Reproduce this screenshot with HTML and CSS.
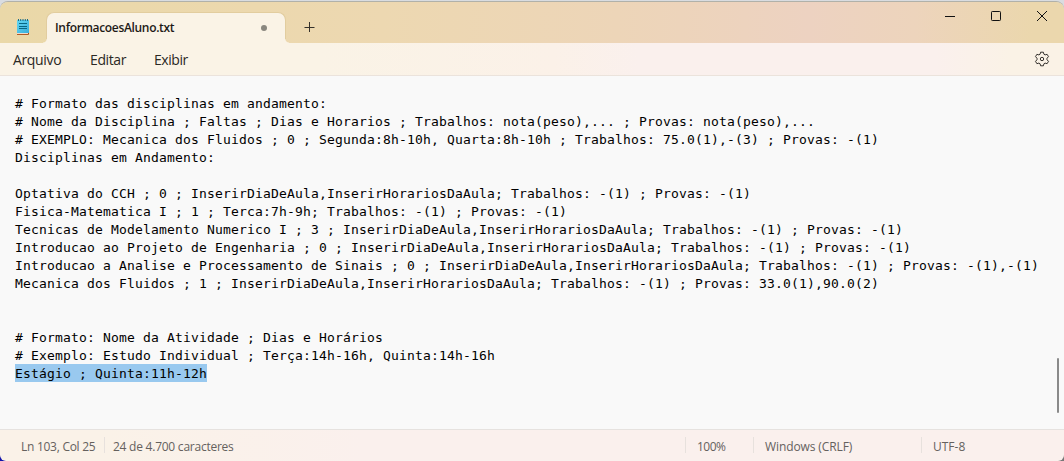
FILE: index.html
```html
<!DOCTYPE html>
<html lang="pt-BR">
<head>
<meta charset="utf-8">
<title>InformacoesAluno.txt</title>
<link rel="stylesheet" href="styles.css">
</head>
<body>
<div class="window">
  <header class="titlebar">
    <svg class="app-icon" width="14" height="18" viewBox="0 0 14 18">
      <defs><linearGradient id="note" x1="0" y1="0" x2="1" y2="1"><stop stop-color="#63d8f3"/><stop offset="1" stop-color="#38addb"/></linearGradient></defs>
      <path d="M1 14h12v2H1z" fill="#f5eee3"/>
      <path d="M1 16.4h11.5V15" fill="none" stroke="#a84b16"/>
      <rect x="1" y="2" width="12" height="13" rx=".6" fill="url(#note)"/>
      <path d="M2.5 1v2M4.7 1v2M7 1v2M9.3 1v2M11.5 1v2" stroke="#176984" stroke-width="1"/>
      <path d="M3 5.5h8M3 8.5h8M3 10.5h8" stroke="#086783"/>
    </svg>
    <div class="tab"><span class="tab-name">InformacoesAluno.txt</span><span class="unsaved"></span></div>
    <svg class="add" width="12" height="12" viewBox="0 0 12 12"><path d="M6.5 1v10M1.5 6.5h10" stroke="#35312a" fill="none"/></svg>
    <div class="controls">
      <svg width="12" height="12" viewBox="0 0 12 12"><path d="M1 6.5h10" stroke="#111"/></svg>
      <svg width="12" height="12" viewBox="0 0 12 12"><rect x="1.5" y="1.5" width="9" height="9" rx=".8" fill="none" stroke="#111"/></svg>
      <svg width="12" height="12" viewBox="0 0 12 12"><path d="M1 1l10 10M11 1L1 11" stroke="#111"/></svg>
    </div>
  </header>
  <nav class="menubar">
    <span class="menu m-file">Arquivo</span><span class="menu m-edit">Editar</span><span class="menu m-view">Exibir</span>
    <svg class="gear" width="16" height="16" viewBox="0 0 16 16" fill="none" stroke="#35322e" stroke-linejoin="round">
      <path d="M6.6 1.2h2.8l.5 2 1.2.7 2-.6 1.4 2.4-1.5 1.5v1.6l1.5 1.5-1.4 2.4-2-.6-1.2.7-.5 2H6.6l-.5-2-1.2-.7-2 .6-1.4-2.4L3 8.8V7.2L1.5 5.7l1.4-2.4 2 .6 1.2-.7z"/>
      <circle cx="8" cy="8" r="1.7"/>
    </svg>
  </nav>
  <main class="editor">
<pre class="text"># Formato das disciplinas em andamento:
# Nome da Disciplina ; Faltas ; Dias e Horarios ; Trabalhos: nota(peso),... ; Provas: nota(peso),...
# EXEMPLO: Mecanica dos Fluidos ; 0 ; Segunda:8h-10h, Quarta:8h-10h ; Trabalhos: 75.0(1),-(3) ; Provas: -(1)
Disciplinas em Andamento:

Optativa do CCH ; 0 ; InserirDiaDeAula,InserirHorariosDaAula; Trabalhos: -(1) ; Provas: -(1)
Fisica-Matematica I ; 1 ; Terca:7h-9h; Trabalhos: -(1) ; Provas: -(1)
Tecnicas de Modelamento Numerico I ; 3 ; InserirDiaDeAula,InserirHorariosDaAula; Trabalhos: -(1) ; Provas: -(1)
Introducao ao Projeto de Engenharia ; 0 ; InserirDiaDeAula,InserirHorariosDaAula; Trabalhos: -(1) ; Provas: -(1)
Introducao a Analise e Processamento de Sinais ; 0 ; InserirDiaDeAula,InserirHorariosDaAula; Trabalhos: -(1) ; Provas: -(1),-(1)
Mecanica dos Fluidos ; 1 ; InserirDiaDeAula,InserirHorariosDaAula; Trabalhos: -(1) ; Provas: 33.0(1),90.0(2)


# Formato: Nome da Atividade ; Dias e Horários
# Exemplo: Estudo Individual ; Terça:14h-16h, Quinta:14h-16h
<span class="selected">Estágio ; Quinta:11h-12h</span></pre>
    <div class="scroll-thumb"></div>
  </main>
  <footer class="statusbar">
    <div class="cell position"><span>Ln 103, Col 25</span></div>
    <div class="cell count"><span>24 de 4.700 caracteres</span></div>
    <div class="cell zoom"><span>100%</span></div>
    <div class="cell eol"><span>Windows (CRLF)</span></div>
    <div class="cell encoding"><span>UTF-8</span></div>
  </footer>
</div>
</body>
</html>
```
FILE: styles.css
```css
* { box-sizing: border-box; }
body {
  margin: 0;
  width: 1064px;
  height: 461px;
  overflow: hidden;
  padding-top: 1px;
  background: linear-gradient(#d9dce0 0 50%, transparent 50%), linear-gradient(90deg, #1414aa 50%, #777 50%);
  font-family: "Open Sans", "Noto Sans", sans-serif;
}
svg { display: block; flex: none; }
.window {
  height: 460px;
  display: flex;
  flex-direction: column;
  border-top: 1px solid #b1b1a9;
  border-radius: 8px 8px 6px 6px;
  overflow: hidden;
}
.titlebar {
  height: 41px;
  display: flex;
  background: linear-gradient(90deg, #ead8a8 0, #edd8b1 36%, #edd5b8 58%, #edd2c1 76%, #edd4bc 86%, #ebd7ad 97%);
}
.app-icon { margin: 16px 0 0 16px; }
.tab {
  position: relative;
  width: 240px;
  height: 31px;
  margin: 10px 0 0 16px;
  padding: 0 18px 0 8px;
  display: flex;
  align-items: center;
  justify-content: space-between;
  border: 1px solid #e2cd9f;
  border-bottom: 0;
  border-radius: 8px 8px 0 0;
  background: #faf3e6;
}
.tab::before, .tab::after {
  content: "";
  position: absolute;
  bottom: 0;
  width: 4px;
  height: 4px;
}
.tab::before { left: -4px; background: radial-gradient(circle at 0 0, transparent 3px, #faf3e6 4px); }
.tab::after { right: -4px; background: radial-gradient(circle at 100% 0, transparent 3px, #faf3e6 4px); }
.tab-name { font-size: 12px; line-height: 16px; font-weight: 600; letter-spacing: -.33px; color: #1d1a16; }
.unsaved { width: 6px; height: 6px; border-radius: 50%; background: #8a877f; }
.add { margin: 19px 0 0 17px; }
.controls { margin: 8px 16px 0 auto; display: flex; gap: 34px; }
.menubar {
  height: 33px;
  display: flex;
  align-items: center;
  padding: 0 14px 0 13px;
  border-bottom: 1px solid #ebe3dc;
  background: linear-gradient(90deg, #faf3e6 0 30%, #fbf1e8 52%, #faf0ed 60% 88%, #faf2e6 95%);
}
.menu { font-size: 14px; line-height: 20px; padding-top: 2px; color: #2b2824; white-space: nowrap; }
.m-file { width: 77px; letter-spacing: -.35px; }
.m-edit { width: 64px; letter-spacing: -.4px; }
.m-view { letter-spacing: -.45px; }
.gear { margin-left: auto; }
.editor {
  height: 354px;
  display: flex;
  justify-content: space-between;
  padding: 19px 5px 0 15px;
  background: #f9f9f9;
}
.text {
  margin: 0;
  font: 13px/18px "DejaVu Sans Mono", monospace;
  letter-spacing: .174px;
  color: #000;
}
.selected {
  display: inline-block;
  height: 18px;
  background: linear-gradient(#99c9ef, #99c9ef);
  margin-top: -1px;
  padding-top: 1px;
  background-size: 100% 18px;
  vertical-align: top;
  line-height: 17px;
}
.scroll-thumb { width: 2px; height: 55px; margin-top: 263px; flex: none; border-radius: 1px; background: #8a8a8a; }
.statusbar {
  height: 32px;
  display: flex;
  padding-top: 7px;
  border-top: 1px solid #e6e2df;
  background: linear-gradient(90deg, #faf2e8 0 10%, #faf0ed 34%);
  font-size: 12px;
  line-height: 19px;
  color: #65615e;
}
.cell { height: 16px; border-left: 1px solid #e7e1dd; white-space: nowrap; }
.position { width: 104px; padding-left: 21px; border-left: 0; letter-spacing: -.27px; }
.count { width: 581px; padding-left: 8px; letter-spacing: -.24px; }
.zoom { width: 68px; padding-left: 11px; letter-spacing: -.5px; }
.eol { width: 168px; padding-left: 11px; letter-spacing: -.1px; }
.encoding { padding-left: 11px; }
```
